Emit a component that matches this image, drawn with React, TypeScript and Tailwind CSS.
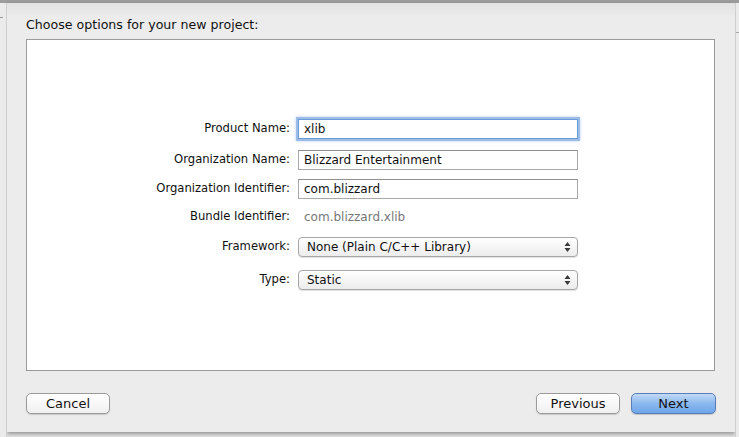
import React from "react";

const font = { fontFamily: '"DejaVu Sans", "Liberation Sans", sans-serif' };

function Field({ value, focused }: { value: string; focused?: boolean }) {
  return (
    <div
      className={
        "h-[20px] w-[280px] bg-white flex items-center pl-[5px] text-[12px] text-[#111] " +
        (focused
          ? "border border-[#6d9bd8] shadow-[0_0_0_2px_#9cbde8,0_0_3px_2px_#b8d0f0]"
          : "border border-[#a8a8a8] border-t-[#8e8e8e]")
      }
    >
      {value}
    </div>
  );
}

function Popup({ value }: { value: string }) {
  return (
    <div className="h-[20px] w-[280px] rounded-[4px] border border-[#a6a6a6] bg-gradient-to-b from-[#ffffff] to-[#ececec] shadow-[0_1px_1px_rgba(0,0,0,0.12)] flex items-center pl-[8px] pr-[6px] text-[12px] text-[#111]">
      <span className="flex-1">{value}</span>
      <svg width="7" height="12" viewBox="0 0 7 12">
        <path d="M3.5 1 L6.5 5 L0.5 5 Z" fill="#3a3a3a" />
        <path d="M3.5 11 L6.5 7 L0.5 7 Z" fill="#3a3a3a" />
      </svg>
    </div>
  );
}

function Label({ children }: { children: React.ReactNode }) {
  return <div className="w-[263px] text-right text-[11.6px] text-[#111]">{children}</div>;
}

function Row({ label, children, mt }: { label: string; children: React.ReactNode; mt: string }) {
  return (
    <div className={"flex items-center gap-[8px] " + mt}>
      <Label>{label}</Label>
      {children}
    </div>
  );
}

function Button({ children, primary, w }: { children: React.ReactNode; primary?: boolean; w: string }) {
  return (
    <div
      className={
        "h-[21px] rounded-[5px] flex items-center justify-center text-[13px] text-[#111] " +
        w +
        " " +
        (primary
          ? "border border-[#5a7fb8] bg-gradient-to-b from-[#c3daf6] via-[#8bb8ee] to-[#6ea5ea] shadow-[0_1px_1px_rgba(0,0,0,0.18)]"
          : "border border-[#9a9a9a] bg-gradient-to-b from-[#ffffff] to-[#f0f0f0] shadow-[0_1px_1px_rgba(0,0,0,0.15)]")
      }
    >
      {children}
    </div>
  );
}

export default function App() {
  return (
    <div className="w-[739px] h-[437px] bg-[#e4e4e4] flex flex-col overflow-hidden" style={font}>
      <div className="h-[3px] bg-[#9c9c9c] shrink-0" />
      <div className="flex flex-1">
        <div className="w-[7px] shrink-0 bg-[#ebebeb] border-r border-[#cfcfcf] relative">
          <div className="absolute left-0 top-[14px] w-[3px] h-[1px] bg-[#9a9a9a]" />
        </div>
        <div className="w-[728px] h-[429px] shrink-0 bg-[#ececec] flex flex-col shadow-[0_2px_4px_rgba(0,0,0,0.35)]">
          <div className="h-[36px] pl-[19px] pt-[13px] text-[12.6px] text-[#111] bg-gradient-to-b from-[#e2e2e2] to-[#ececec] to-[40%]">
            Choose options for your new project:
          </div>
          <div className="ml-[19px] w-[689px] h-[332px] bg-white border border-[#9a9a9a] pt-[79px]">
            <Row label="Product Name:" mt="mt-0">
              <Field value="xlib" focused />
            </Row>
            <Row label="Organization Name:" mt="mt-[11px]">
              <Field value="Blizzard Entertainment" />
            </Row>
            <Row label="Organization Identifier:" mt="mt-[9px]">
              <Field value="com.blizzard" />
            </Row>
            <Row label="Bundle Identifier:" mt="mt-[8px]">
              <div className="h-[20px] flex items-center pl-[6px] text-[12px] text-[#777]">com.blizzard.xlib</div>
            </Row>
            <Row label="Framework:" mt="mt-[10px]">
              <Popup value="None (Plain C/C++ Library)" />
            </Row>
            <Row label="Type:" mt="mt-[13px]">
              <Popup value="Static" />
            </Row>
          </div>
          <div className="flex items-center mt-[22px] pl-[19px] pr-[19px]">
            <Button w="w-[84px]">Cancel</Button>
            <div className="flex-1" />
            <Button w="w-[84px]">Previous</Button>
            <div className="w-[11px]" />
            <Button w="w-[85px]" primary>
              Next
            </Button>
          </div>
        </div>
        <div className="flex-1 bg-[#ebebeb] border-l border-[#cfcfcf] relative">
          <div className="absolute left-0 top-[29px] w-full h-[1px] bg-[#a8a8a8]" />
        </div>
      </div>
    </div>
  );
}
